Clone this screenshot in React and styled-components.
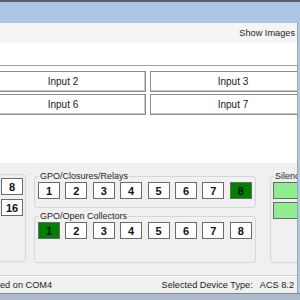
import React from 'react';
import styled, { createGlobalStyle } from 'styled-components';

const Global = createGlobalStyle`
  html, body { margin: 0; padding: 0; width: 300px; height: 300px; overflow: hidden; background: #fff; }
  #root { width: 300px; height: 300px; }
`;

const Window = styled.div`
  width: 300px;
  height: 300px;
  display: flex;
  flex-direction: column;
  overflow: hidden;
  font-family: "Liberation Sans", Arial, sans-serif;
  color: #1e1e1e;
`;

const TitleBar = styled.div`
  flex: none;
  height: 21px;
  border-top: 2px solid #56606b;
  background: #abc6e2;
`;

const Client = styled.div`
  flex: 1;
  display: flex;
  min-height: 0;
  border-right: 2px solid #b3c8df;
`;

const Main = styled.div`
  flex: 1;
  min-width: 0;
  display: flex;
  flex-direction: column;
  overflow: hidden;
  border-right: 1px solid #97a6b7;
`;

const MenuBar = styled.div`
  flex: none;
  height: 20px;
  background: #f5f5f5;
  display: flex;
  align-items: center;
  justify-content: flex-end;
  padding-right: 2px;
  font-size: 9.2px;
`;

const Content = styled.div`
  flex: none;
  height: 120px;
  background: #fff;
  padding-top: 22px;
  box-sizing: border-box;
`;

const Separator = styled.div`
  height: 1px;
  background: #a0a0a0;
  margin-bottom: 5px;
`;

const InputGrid = styled.div`
  display: grid;
  grid-template-columns: 166px 166px;
  grid-auto-rows: 21px;
  column-gap: 4px;
  row-gap: 2px;
  margin-left: -20px;
`;

const InputButton = styled.div`
  box-sizing: border-box;
  border: 1px solid #8c8c8c;
  box-shadow: inset -1px -1px 0 #c9c9c9;
  background: #fff;
  display: flex;
  align-items: center;
  justify-content: center;
  font-size: 10px;
  color: #1a1a1a;
`;

const Panel = styled.div`
  flex: none;
  height: 112px;
  background: #f0f0f0;
  display: flex;
  align-items: flex-start;
  padding-top: 8px;
  box-sizing: border-box;
  overflow: hidden;
`;

const Group = styled.fieldset`
  margin: 0;
  min-width: 0;
  box-sizing: border-box;
  border: 1px solid #d3d7db;
  border-radius: 3px;
  flex: none;
`;

const Legend = styled.legend`
  padding: 0 1px;
  margin-left: 1px;
  font-size: 9px;
  line-height: 10px;
  color: #1e1e1e;
  white-space: nowrap;
`;

const LeftGroup = styled(Group)`
  width: 66px;
  height: 88px;
  margin-left: -40px;
  margin-top: 3px;
  padding: 3px 2px 0 0;
  display: flex;
  flex-direction: column;
  align-items: flex-end;
  gap: 4px;
`;

const MiddleColumn = styled.div`
  flex: none;
  width: 222px;
  margin-left: 8px;
  display: flex;
  flex-direction: column;
  gap: 3px;
`;

const BoxGroup = styled(Group)`
  width: 222px;
  height: ${p => p.$h}px;
  padding: 1px 0 0 3px;
`;

const BoxRow = styled.div`
  display: flex;
  gap: 5.4px;
`;

const SilenceGroup = styled(Group)`
  width: 70px;
  height: 92px;
  margin-left: 14px;
  padding: 1px 0 0 2px;
  display: flex;
  flex-direction: column;
  gap: 3px;
`;

const Box = styled.div`
  flex: none;
  width: ${p => p.$w || 22}px;
  height: 17px;
  box-sizing: border-box;
  border: 1px solid #6a6a6a;
  background: ${p => p.$bg || '#fff'};
  display: flex;
  align-items: center;
  justify-content: center;
  font-size: 11px;
  font-weight: bold;
  color: #111;
`;

const StatusBar = styled.div`
  flex: none;
  height: 18px;
  box-sizing: border-box;
  background: #f0f0f0;
  border-top: 1px solid #d2d2d2;
  box-shadow: inset 0 1px 0 #fbfbfb;
  display: flex;
  align-items: center;
  justify-content: space-between;
  padding-right: 3px;
  font-size: 9.2px;
  white-space: nowrap;
`;

const StatusRight = styled.div`
  display: flex;
  gap: 7px;
`;

const BottomFrame = styled.div`
  flex: none;
  height: 6px;
  border-top: 1px solid #7d8894;
  background: #aebdcd;
`;

const GREEN = '#008000';
const LIGHT = '#90ee90';

export default function App() {
  const nums = [1, 2, 3, 4, 5, 6, 7, 8];
  return (
    <>
      <Global />
      <Window>
        <TitleBar />
        <Client>
          <Main>
            <MenuBar>Show Images</MenuBar>
            <Content>
              <Separator />
              <InputGrid>
                <InputButton>Input 2</InputButton>
                <InputButton>Input 3</InputButton>
                <InputButton>Input 6</InputButton>
                <InputButton>Input 7</InputButton>
              </InputGrid>
            </Content>
            <Panel>
              <LeftGroup>
                <Box>8</Box>
                <Box>16</Box>
              </LeftGroup>
              <MiddleColumn>
                <BoxGroup $h={37}>
                  <Legend>GPO/Closures/Relays</Legend>
                  <BoxRow>
                    {nums.map(n => (
                      <Box key={n} $bg={n === 8 ? GREEN : undefined}>{n}</Box>
                    ))}
                  </BoxRow>
                </BoxGroup>
                <BoxGroup $h={52}>
                  <Legend>GPO/Open Collectors</Legend>
                  <BoxRow>
                    {nums.map(n => (
                      <Box key={n} $bg={n === 1 ? GREEN : undefined}>{n}</Box>
                    ))}
                  </BoxRow>
                </BoxGroup>
              </MiddleColumn>
              <SilenceGroup>
                <Legend>Silence</Legend>
                <Box $w={60} $bg={LIGHT} />
                <Box $w={60} $bg={LIGHT} />
              </SilenceGroup>
            </Panel>
            <StatusBar>
              <span>ed on COM4</span>
              <StatusRight>
                <span>Selected Device Type:</span>
                <span>ACS 8.2</span>
              </StatusRight>
            </StatusBar>
          </Main>
        </Client>
        <BottomFrame />
      </Window>
    </>
  );
}
